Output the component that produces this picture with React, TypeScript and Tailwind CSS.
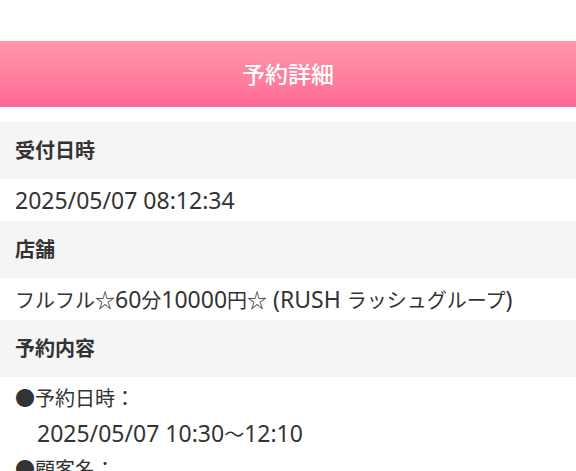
// Latin runs are set a bit larger than the CJK ones, as Hiragino does
function L({ children }: { children: React.ReactNode }) {
  return <span className="text-[23px]">{children}</span>;
}

function Label({ children }: { children: React.ReactNode }) {
  return (
    <div className="h-[57px] bg-[#f5f5f5] flex items-center px-[15px] text-[20px] font-bold">
      {children}
    </div>
  );
}

export default function App() {
  const font = { fontFamily: '"Noto Sans", "Noto Sans CJK JP", sans-serif' };
  return (
    <div className="min-h-screen bg-white text-[#333]" style={font}>
      <div className="h-[41px]" />
      <div className="h-[66px] flex items-center justify-center bg-gradient-to-b from-[#ff97aa] to-[#ff6994]">
        <h1 className="text-[23px] text-white font-medium">予約詳細</h1>
      </div>
      <div className="h-[15px]" />
      <Label>受付日時</Label>
      <div className="h-[42px] flex items-center px-[15px] text-[23px]">2025/05/07 08:12:34</div>
      <Label>店舗</Label>
      <div className="h-[42px] flex items-center px-[15px] text-[20px] whitespace-nowrap">
        <span>
          フルフル☆<L>60</L>分<L>10000</L>円☆<L> (RUSH </L>ラッシュグループ<L>)</L>
        </span>
      </div>
      <Label>予約内容</Label>
      <div className="px-[15px] pt-[4px] text-[20px] leading-[35px]">
        <p>●予約日時：</p>
        <p className="pl-[22px]">
          <L>2025/05/07 10:30</L>〜<L>12:10</L>
        </p>
        <p>●顧客名：</p>
      </div>
    </div>
  );
}
